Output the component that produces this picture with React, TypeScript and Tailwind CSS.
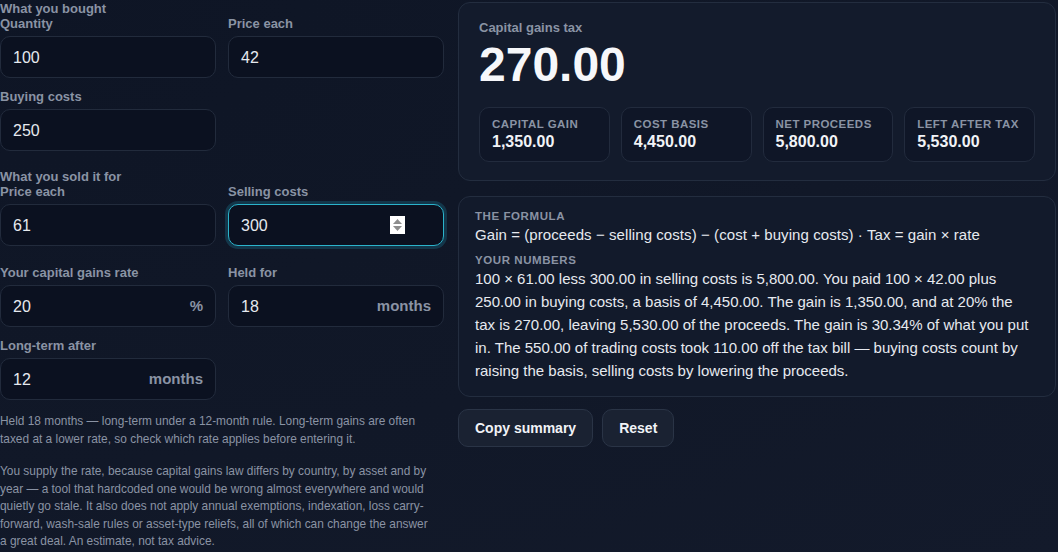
import type { ReactNode } from "react";

const FONT = { fontFamily: '"Liberation Sans", Arial, sans-serif' };

function Label({ children }: { children: ReactNode }) {
  return (
    <div className="mb-[5px] text-[13px] leading-[15px] font-bold text-[#8a93a4]">
      {children}
    </div>
  );
}

function Field({
  label,
  value,
  suffix,
  focused,
}: {
  label: string;
  value: string;
  suffix?: string;
  focused?: boolean;
}) {
  return (
    <div>
      <Label>{label}</Label>
      <div
        className={
          focused
            ? "relative flex h-[42px] items-center rounded-[10px] border-[1.5px] border-[#2bb3cb] bg-[#0b1120] px-3 pt-[1px] shadow-[0_0_0_3px_rgba(34,170,200,0.22)]"
            : "relative flex h-[42px] items-center rounded-[10px] border border-[#222b3c] bg-[#0b1120] px-3 pt-[1px]"
        }
      >
        <span className="flex-1 text-[16px] text-[#e6e9ef]">{value}</span>
        {suffix && (
          <span className="text-[15px] font-bold text-[#8a93a4]">{suffix}</span>
        )}
        {focused && (
          <span className="absolute top-[11px] right-[38px] flex h-[18px] w-[15px] flex-col items-center justify-center gap-[2px] bg-white">
            <svg width="9" height="5" viewBox="0 0 9 5">
              <path d="M0 5 L4.5 0 L9 5 Z" fill="#8d8d8d" />
            </svg>
            <svg width="9" height="5" viewBox="0 0 9 5">
              <path d="M0 0 L4.5 5 L9 0 Z" fill="#8d8d8d" />
            </svg>
          </span>
        )}
      </div>
    </div>
  );
}

function Legend({ children }: { children: ReactNode }) {
  return (
    <div className="text-[13px] leading-[15px] font-bold text-[#8a93a4]">{children}</div>
  );
}

function Stat({ label, value }: { label: string; value: string }) {
  return (
    <div className="rounded-[10px] border border-[#222b3d] bg-[#0f1627] px-[12px] pt-[9px] pb-[10px]">
      <div className="text-[11.5px] leading-[14px] font-bold tracking-[0.04em] whitespace-nowrap text-[#8a93a4]">
        {label}
      </div>
      <div className="mt-[1px] text-[16px] leading-[19px] font-bold text-[#f1f3f7]">{value}</div>
    </div>
  );
}

export default function App() {
  return (
    <div
      className="h-[552px] w-[1058px] overflow-hidden bg-[radial-gradient(ellipse_at_top_left,#0e1525_0%,#111828_60%,#131a2b_100%)]"
      style={FONT}
    >
      <div className="grid grid-cols-[444px_598px] gap-[14px]">
        {/* inputs */}
        <div className="pt-[1px]">
          <Legend>What you bought</Legend>
          <div className="grid grid-cols-2 gap-x-3 gap-y-[11px]">
            <Field label="Quantity" value="100" />
            <Field label="Price each" value="42" />
            <Field label="Buying costs" value="250" />
          </div>

          <div className="mt-[18px]">
            <Legend>What you sold it for</Legend>
            <div className="grid grid-cols-2 gap-x-3">
              <Field label="Price each" value="61" />
              <Field label="Selling costs" value="300" focused />
            </div>
          </div>

          <div className="mt-[19px] grid grid-cols-2 gap-x-3 gap-y-[11px]">
            <Field label="Your capital gains rate" value="20" suffix="%" />
            <Field label="Held for" value="18" suffix="months" />
            <Field label="Long-term after" value="12" suffix="months" />
          </div>

          <p className="mt-[12px] text-[11.9px] leading-[18px] whitespace-nowrap text-[#8a93a4]">
            Held 18 months — long-term under a 12-month rule. Long-term gains are often
            <br />
            taxed at a lower rate, so check which rate applies before entering it.
          </p>
          <p className="mt-[15px] text-[11.9px] leading-[17.6px] whitespace-nowrap text-[#8a93a4]">
            You supply the rate, because capital gains law differs by country, by asset and by
            <br />
            year — a tool that hardcoded one would be wrong almost everywhere and would
            <br />
            quietly go stale. It also does not apply annual exemptions, indexation, loss carry-
            <br />
            forward, wash-sale rules or asset-type reliefs, all of which can change the answer
            <br />
            a great deal. An estimate, not tax advice.
          </p>
        </div>

        {/* results */}
        <div className="pt-[2px]">
          <div className="rounded-[12px] border border-[#232d3f] bg-[#131b2c] px-5 pt-[17px] pb-[18px]">
            <div className="text-[13px] leading-[15px] font-bold text-[#8a93a4]">
              Capital gains tax
            </div>
            <div className="mt-[2px] text-[48px] leading-[56px] font-bold text-[#f6f7fa]">
              270.00
            </div>
            <div className="mt-[14px] grid grid-cols-4 gap-[11px]">
              <Stat label="CAPITAL GAIN" value="1,350.00" />
              <Stat label="COST BASIS" value="4,450.00" />
              <Stat label="NET PROCEEDS" value="5,800.00" />
              <Stat label="LEFT AFTER TAX" value="5,530.00" />
            </div>
          </div>

          <div className="mt-[15px] rounded-[12px] border border-[#232d3f] bg-[#121a2b] px-[16px] pt-[12px] pb-[14px]">
            <div className="text-[11.5px] leading-[14px] font-bold tracking-[0.05em] text-[#8a93a4]">
              THE FORMULA
            </div>
            <div className="mt-[2px] text-[15px] leading-[20px] tracking-[0.005em] text-[#e6e9ef]">
              Gain = (proceeds − selling costs) − (cost + buying costs) · Tax = gain × rate
            </div>
            <div className="mt-[8px] text-[11.5px] leading-[14px] font-bold tracking-[0.05em] text-[#8a93a4]">
              YOUR NUMBERS
            </div>
            <p className="text-[15px] leading-[23px] whitespace-nowrap text-[#e6e9ef]">
              100 × 61.00 less 300.00 in selling costs is 5,800.00. You paid 100 × 42.00 plus
              <br />
              250.00 in buying costs, a basis of 4,450.00. The gain is 1,350.00, and at 20% the
              <br />
              tax is 270.00, leaving 5,530.00 of the proceeds. The gain is 30.34% of what you put
              <br />
              in. The 550.00 of trading costs took 110.00 off the tax bill — buying costs count by
              <br />
              raising the basis, selling costs by lowering the proceeds.
            </p>
          </div>

          <div className="mt-[12px] flex gap-[9px]">
            <button className="h-[38px] rounded-[10px] border border-[#2a3446] bg-[#1a2232] px-4 text-[14px] font-bold text-[#f1f3f7]">
              Copy summary
            </button>
            <button className="h-[38px] rounded-[10px] border border-[#2a3446] bg-[#1a2232] px-4 text-[14px] font-bold text-[#f1f3f7]">
              Reset
            </button>
          </div>
        </div>
      </div>
    </div>
  );
}
